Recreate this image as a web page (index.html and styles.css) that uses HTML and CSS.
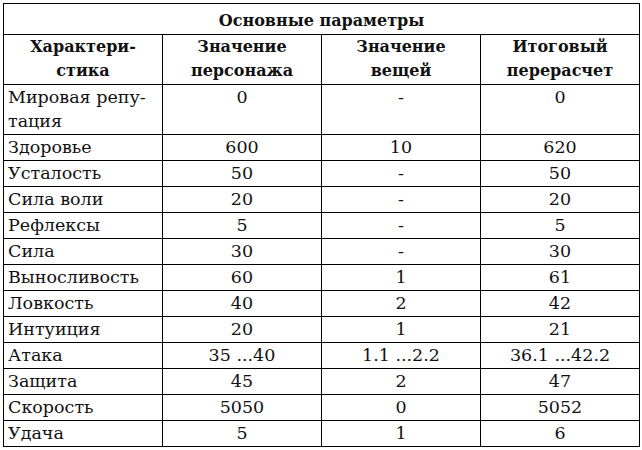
FILE: index.html
```html
<!DOCTYPE html>
<html lang="ru">
<head>
<meta charset="utf-8">
<title>Основные параметры</title>
<link rel="stylesheet" href="styles.css">
</head>
<body>
<table class="params">
  <colgroup>
    <col class="c1"><col class="c2"><col class="c3"><col class="c4">
  </colgroup>
  <thead>
    <tr><th class="title" colspan="4">Основные параметры</th></tr>
    <tr class="head">
      <th>Характери-<br>стика</th>
      <th>Значение<br>персонажа</th>
      <th>Значение<br>вещей</th>
      <th>Итоговый<br>перерасчет</th>
    </tr>
  </thead>
  <tbody>
    <tr><td>Мировая репу-<br>тация</td><td>0</td><td>-</td><td>0</td></tr>
    <tr><td>Здоровье</td><td>600</td><td>10</td><td>620</td></tr>
    <tr><td>Усталость</td><td>50</td><td>-</td><td>50</td></tr>
    <tr><td>Сила воли</td><td>20</td><td>-</td><td>20</td></tr>
    <tr><td>Рефлексы</td><td>5</td><td>-</td><td>5</td></tr>
    <tr><td>Сила</td><td>30</td><td>-</td><td>30</td></tr>
    <tr><td>Выносливость</td><td>60</td><td>1</td><td>61</td></tr>
    <tr><td>Ловкость</td><td>40</td><td>2</td><td>42</td></tr>
    <tr><td>Интуиция</td><td>20</td><td>1</td><td>21</td></tr>
    <tr><td>Атака</td><td>35 ...40</td><td>1.1 ...2.2</td><td>36.1 ...42.2</td></tr>
    <tr><td>Защита</td><td>45</td><td>2</td><td>47</td></tr>
    <tr><td>Скорость</td><td>5050</td><td>0</td><td>5052</td></tr>
    <tr><td>Удача</td><td>5</td><td>1</td><td>6</td></tr>
  </tbody>
</table>
</body>
</html>
```
FILE: styles.css
```css
html, body {
  margin: 0;
  padding: 0;
  background: #ffffff;
}
body {
  padding: 3px 0 0 3px;
  font-family: "DejaVu Serif", "Liberation Serif", serif;
  color: #111111;
}
.params {
  border-collapse: collapse;
  table-layout: fixed;
  width: 637px;
  font-size: 16px;
  line-height: 24px;
}
.params col { width: 25%; }
.params th,
.params td {
  border: 1px solid #000000;
  padding: 0 4px 1px 4px;
  vertical-align: top;
  text-align: center;
  font-weight: normal;
}
.params td {
  font-size: 17.5px;
}
.params th {
  font-weight: bold;
}
.params .title {
  padding-top: 5px;
  padding-bottom: 1px;
}
.params td:first-child {
  text-align: left;
}
```
